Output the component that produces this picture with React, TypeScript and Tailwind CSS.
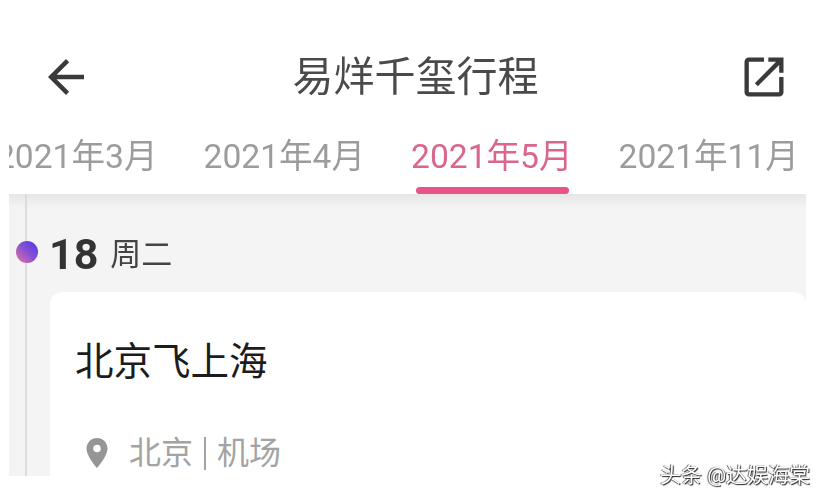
const sans = "font-['Roboto','Noto_Sans_CJK_SC',sans-serif]";

const months = ["2021年3月", "2021年4月", "2021年5月", "2021年11月"];

function Tab({ label, active }: { label: string; active: boolean }) {
  return (
    <div className="flex shrink-0 flex-col">
      <span className={`text-[33.6px] leading-[40px] whitespace-nowrap ${active ? "text-[#d8668f]" : "text-[#9c9c9c]"}`}>
        {label}
      </span>
      <div className={`mt-[10px] mr-[4px] ml-[5px] h-[7px] rounded-full ${active ? "bg-[#e8548a]" : "bg-transparent"}`} />
    </div>
  );
}

export default function App() {
  return (
    <div className={`relative h-[500px] w-[827px] overflow-hidden bg-white ${sans}`}>
      <div className="blur-[0.6px]">
        {/* Header */}
        <div className="flex items-center justify-between pt-[50px] pr-[37px] pl-[39px]">
          <svg viewBox="0 0 24 24" className="h-[54px] w-[54px] fill-[#3a3a3a]">
            <path d="M20 11H7.83l5.59-5.59L12 4l-8 8 8 8 1.41-1.41L7.83 13H20v-2z" />
          </svg>
          <h1 className="text-[41px] leading-[54px] font-normal text-[#4a4a4a]">易烊千玺行程</h1>
          <svg viewBox="0 0 24 24" className="h-[52px] w-[52px] fill-[#3a3a3a]">
            <path d="M19 19H5V5h7V3H5a2 2 0 0 0-2 2v14a2 2 0 0 0 2 2h14c1.1 0 2-.9 2-2v-7h-2v7zM14 3v2h3.59l-9.83 9.83 1.41 1.41L19 6.41V10h2V3h-7z" />
          </svg>
        </div>

        {/* Month tabs */}
        <div className="mt-[33px] ml-[9px] w-[797px] overflow-hidden">
          <div className="-ml-[13px] flex gap-[46px]">
            {months.map((m) => (
              <Tab key={m} label={m} active={m === "2021年5月"} />
            ))}
          </div>
        </div>

        {/* Timeline panel */}
        <div className="relative ml-[9px] flex h-[282px] w-[797px] flex-col overflow-hidden bg-[#f4f4f5]">
          <div className="absolute top-0 left-0 h-[14px] w-full bg-gradient-to-b from-[#e6e6e6] to-[#f4f4f5]" />
          <div className="absolute top-0 bottom-0 left-[16px] w-[2px] bg-[#dcdcdc]" />

          <div className="relative flex h-[98px] shrink-0 items-center pt-[18px] pl-[7px]">
            <div className="h-[22px] w-[22px] rounded-full bg-gradient-to-tr from-[#ec6a9a] via-[#8a4fd0] to-[#4a2cf0]" />
            <span className="ml-[11px] pt-[4px] text-[43px] leading-none font-bold text-[#333333]">18</span>
            <span className="ml-[12px] pt-[4px] text-[31px] leading-none text-[#444444]">周二</span>
          </div>

          <div className="relative ml-[41px] flex-1 rounded-t-[12px] bg-white pt-[44px] pl-[25px]">
            <div className="text-[38.5px] leading-[52px] text-[#1c1c1c]">北京飞上海</div>
            <div className="mt-[47px] flex items-center pl-[4px] text-[32px] leading-[36px] text-[#a3a3a3]">
              <svg viewBox="0 0 24 24" className="h-[36px] w-[36px] fill-[#959595]">
                <path d="M12 2C8.13 2 5 5.13 5 9c0 5.25 7 13 7 13s7-7.75 7-13c0-3.87-3.13-7-7-7zm0 9.5a2.5 2.5 0 0 1 0-5 2.5 2.5 0 0 1 0 5z" />
              </svg>
              <span className="ml-[14px]">北京</span>
              <span className="mx-[11px] h-[33px] w-[2px] bg-[#a3a3a3]" />
              <span>机场</span>
            </div>
          </div>
        </div>
      </div>

      {/* Watermark */}
      <div className="absolute top-[462px] left-[660px] text-[21px] leading-[26px] whitespace-nowrap text-white [text-shadow:1px_1px_1px_#222,-1px_0_1px_#555]">
        头条 @达娱海棠
      </div>
    </div>
  );
}
